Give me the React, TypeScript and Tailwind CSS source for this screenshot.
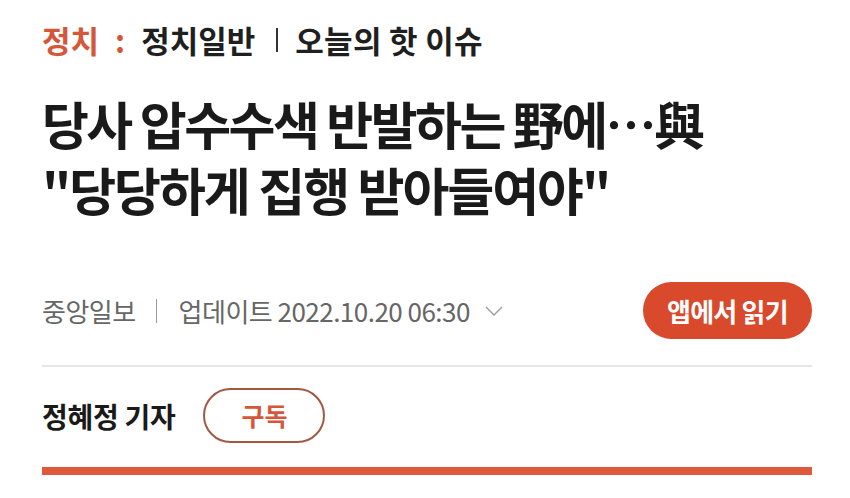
import React from 'react';

const font = { fontFamily: '"Noto Sans CJK KR", "Noto Sans", sans-serif' };

const ArticleHeader = () => {
  return (
    <div className="h-[498px] overflow-hidden bg-white pl-[42px] pr-[38px]" style={font}>
      {/* section breadcrumb */}
      <div className="mt-[22px] flex items-center text-[31px] font-bold leading-[36px]">
        <span className="text-[#d4573a]">정치</span>
        <span className="ml-[16px] text-[#d4573a]">:</span>
        <span className="ml-[16px] text-[#1f1f1f]">정치일반</span>
        <span className="ml-[21px] h-[24px] w-[2px] bg-[#333]" />
        <span className="ml-[17px] tracking-[0.01em] text-[#1f1f1f]">오늘의 핫 이슈</span>
      </div>

      {/* headline */}
      <h1 className="mt-[32px] flex flex-col text-[51px] font-bold leading-[66px] tracking-[-0.05em] text-[#1a1a1a]">
        <span>당사 압수수색 반발하는 野에…與</span>
        <span className="tracking-[-0.04em]">"당당하게 집행 받아들여야"</span>
      </h1>

      {/* source, time, app button */}
      <div className="mt-[60px] flex h-[57px] items-center justify-between">
        <div className="flex items-center text-[26px] leading-none tracking-[-0.02em] text-[#666]">
          <span>중앙일보</span>
          <span className="ml-[20px] h-[24px] w-px bg-[#9a9a9a]" />
          <span className="ml-[22px]">업데이트 2022.10.20 06:30</span>
          <svg className="ml-[15px]" width="18" height="12" viewBox="0 0 18 12" fill="none">
            <path d="M1 2l8 8 8-8" stroke="#9a9a9a" strokeWidth="1.3" />
          </svg>
        </div>
        <button className="flex h-[57px] w-[169px] items-center justify-center rounded-full bg-[#d9492b] text-[26px] font-bold tracking-[-0.03em] text-white">
          앱에서 읽기
        </button>
      </div>

      <div className="mt-[26px] h-[2px] bg-[#e6e6e6]" />

      {/* reporter */}
      <div className="mt-[21px] flex h-[55px] items-center">
        <span className="text-[28px] font-bold tracking-[-0.01em] text-[#1a1a1a]">정혜정 기자</span>
        <button className="ml-[28px] flex h-[55px] w-[122px] items-center justify-center rounded-full border-2 border-[#a4583f] text-[25px] font-bold text-[#d4573a]">
          구독
        </button>
      </div>

      <div className="mt-[24px] h-[8px] bg-[#de5a3b]" />
    </div>
  );
};

export default function App() {
  return <ArticleHeader />;
}
